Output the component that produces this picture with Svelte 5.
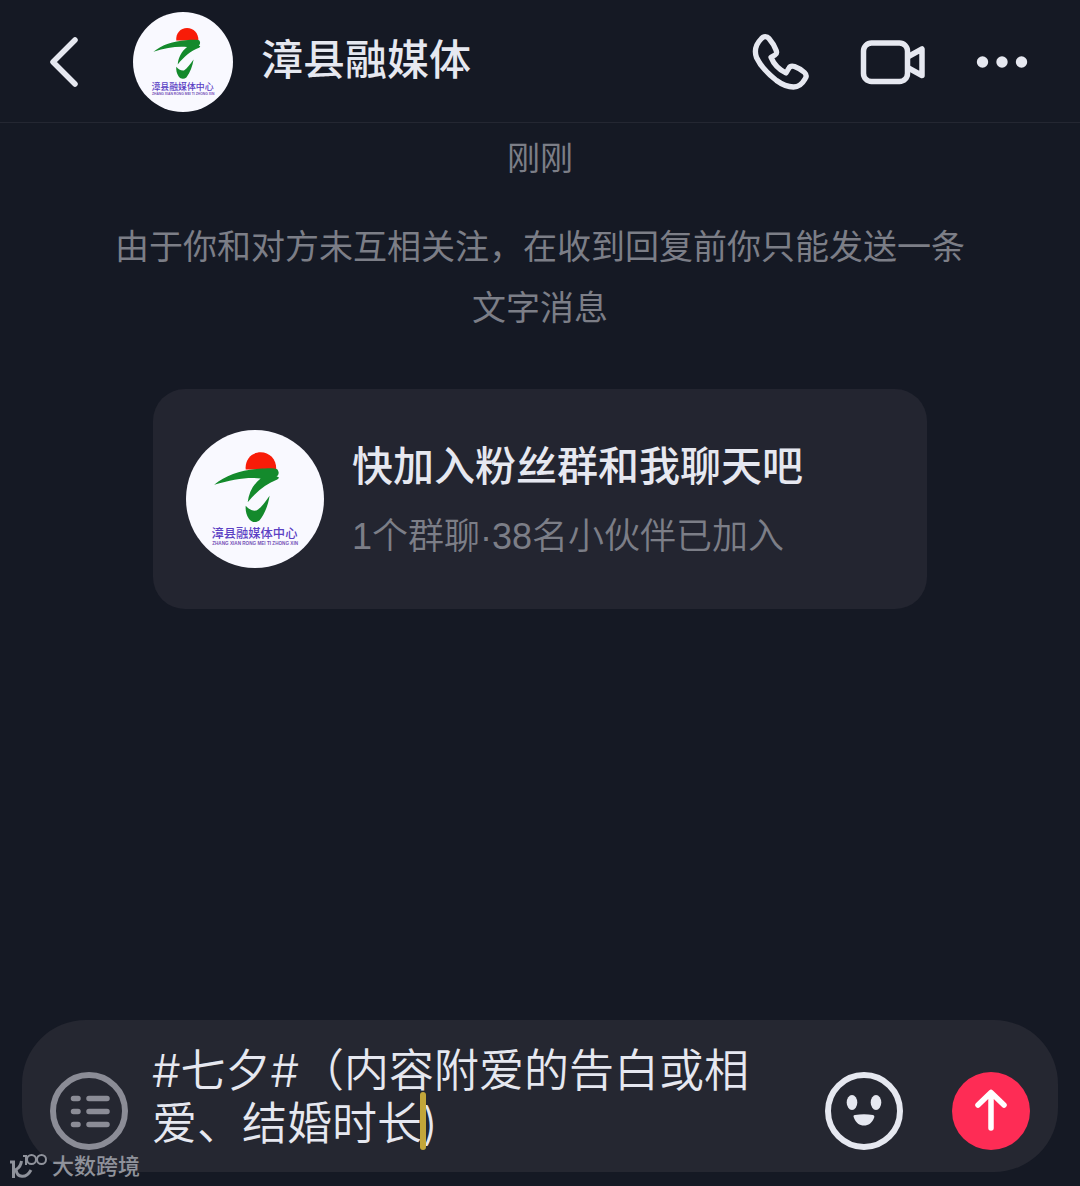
<script>
  let message = $state('#七夕#（内容附爱的告白或相爱、结婚时长)');
</script>

{#snippet logo()}
  <svg class="logo" viewBox="16 14 416 416" role="img" aria-label="漳县融媒体中心">
    <circle cx="224" cy="222" r="208" fill="#f9f9ff" />
    <path d="M196 133C193 104 213 81 241 81C268 81 289 102 288 133Z" fill="#f81c08" />
    <path
      d="M101 179C135 151 184 134 236 131C260 130 278 128 291 132C298 141 296 149 289 155C297 154 298 159 291 163C256 176 229 200 202 232C205 204 218 178 241 160C202 155 155 163 101 179Z"
      fill="#148a2c"
    />
    <path
      d="M196 242C204 252 216 259 228 257C242 249 255 230 268 212C264 238 254 267 238 286C228 294 214 293 206 282C197 269 195 257 196 242Z"
      fill="#148a2c"
    />
    <text class="logo-name" x="93" y="340">漳县融媒体中心</text>
    <text class="logo-pinyin" x="95" y="361">ZHANG XIAN RONG MEI TI ZHONG XIN</text>
  </svg>
{/snippet}

<div class="screen">
  <header class="top">
    <button class="icon" aria-label="返回">
      <svg width="30" height="52" viewBox="0 0 30 52" fill="none" stroke="#e6e8f0" stroke-width="5.5" stroke-linecap="round" stroke-linejoin="round">
        <path d="M26 4L4 26L26 48" />
      </svg>
    </button>
    <div class="avatar small">{@render logo()}</div>
    <h1>漳县融媒体</h1>
    <nav class="actions" aria-label="通话">
      <button class="icon" aria-label="语音通话">
        <svg width="58" height="58" viewBox="0 0 58 58" fill="none" stroke="#e6e8f0" stroke-width="5.3" stroke-linecap="round" stroke-linejoin="round">
          <path d="M9.5 5.5C11.5 3 15 3 17 5.5C20 9 22.5 13 24 17C25 19.5 24.8 21 23 22L19 24.2C21.5 30.5 27 36.5 34 40L37 35C38 33.2 40 32.8 42.5 33.5C46.5 35 50 37 52.5 39.5C54.5 41.5 54.5 44 53 46C50.5 50.5 46 54 41.5 54C36 54 30 51.5 24.5 47.5C16 41 8.5 33 4.5 24.5C2 17.5 4.5 10.5 9.5 5.5Z" />
        </svg>
      </button>
      <button class="icon" aria-label="视频通话">
        <svg width="66" height="46" viewBox="0 0 66 46" fill="none" stroke="#e6e8f0" stroke-width="5.5" stroke-linejoin="round">
          <rect x="3.5" y="4" width="44" height="38.5" rx="8" />
          <path d="M47.5 18L62 10V36.5L47.5 28.5" />
        </svg>
      </button>
      <button class="icon" aria-label="更多">
        <svg width="52" height="14" viewBox="0 0 52 14" fill="#e6e8f0">
          <circle cx="6.5" cy="7" r="5.7" />
          <circle cx="26" cy="7" r="5.7" />
          <circle cx="45.5" cy="7" r="5.7" />
        </svg>
      </button>
    </nav>
  </header>

  <main>
    <p class="time">刚刚</p>
    <p class="notice">由于你和对方未互相关注，在收到回复前你只能发送一条文字消息</p>
    <a class="card" href="#group">
      <div class="avatar large">{@render logo()}</div>
      <div class="card-text">
        <strong>快加入粉丝群和我聊天吧</strong>
        <span class="members">1个群聊·38名小伙伴已加入</span>
      </div>
    </a>
  </main>

  <form class="composer" onsubmit={(e) => e.preventDefault()}>
    <button class="icon" type="button" aria-label="菜单">
      <svg width="78" height="78" viewBox="0 0 78 78" fill="none" stroke="#8b8c96" stroke-linecap="round">
        <circle cx="39" cy="39" r="36" stroke-width="6" />
        <path d="M23.5 26.5H28M39 26.5H57M23.5 39.5H28M39 39.5H57M23.5 52.5H28M39 52.5H57" stroke-width="5.5" />
      </svg>
    </button>
    <div class="field">
      <textarea rows="2" aria-label="发送消息" spellcheck="false" bind:value={message}></textarea>
      <span class="caret"></span>
    </div>
    <button class="icon" type="button" aria-label="表情">
      <svg width="78" height="78" viewBox="0 0 78 78" fill="#e6e8f0">
        <circle cx="39" cy="39" r="36" fill="none" stroke="#e6e8f0" stroke-width="6" />
        <ellipse cx="27" cy="30.5" rx="5.3" ry="7.5" />
        <ellipse cx="51" cy="30.5" rx="5.3" ry="7.5" />
        <path d="M30 43Q39 41.5 48 43Q50 43.5 49 46C47 51 43.5 53.5 39 53.5C34.5 53.5 31 51 29 46C28 43.5 28.5 43.2 30 43Z" />
      </svg>
    </button>
    <button class="icon send" aria-label="发送">
      <svg width="78" height="78" viewBox="0 0 78 78" fill="none" stroke="#fff" stroke-width="5.5" stroke-linecap="round" stroke-linejoin="round">
        <circle cx="39" cy="39" r="39" fill="#fe2c55" stroke="none" />
        <path d="M39 56V21M26 33L39 20.5L52 33" />
      </svg>
    </button>
  </form>

  <div class="watermark">
    <svg width="40" height="26" viewBox="0 0 40 26" fill="none" stroke="#8f929b" stroke-width="3">
      <path d="M0 8H3.5V24M11.5 7C11 11 9 14 6 15.5C7 24 16 25 21 16" />
      <path d="M13 2H16V11" stroke-width="2" />
      <circle cx="21.5" cy="5.5" r="4.5" stroke-width="2" />
      <circle cx="31.5" cy="5.5" r="4.5" stroke-width="2" />
    </svg>
    <span>大数跨境</span>
  </div>
</div>

<style>
  :global(body) {
    margin: 0;
    background: #151924;
  }
  .screen {
    position: relative;
    display: flex;
    flex-direction: column;
    min-height: 100vh;
    box-sizing: border-box;
    padding-bottom: 14px;
    background: #151924;
    color: #e6e8f0;
    font-family: 'Liberation Sans', 'Noto Sans CJK SC', sans-serif;
  }
  svg {
    display: block;
  }
  .icon {
    flex: none;
    padding: 0;
    border: 0;
    background: none;
    cursor: pointer;
  }
  .top {
    display: flex;
    align-items: center;
    padding: 12px 52px 10px 49px;
    border-bottom: 1px solid #242732;
  }
  .avatar {
    flex: none;
  }
  .small {
    width: 100px;
    margin: 0 28px 0 54px;
  }
  .large {
    width: 138px;
  }
  .logo {
    width: 100%;
  }
  .logo-name {
    font-family: 'Noto Sans CJK SC', sans-serif;
    font-size: 37px;
    font-weight: 500;
    fill: #5b41c4;
  }
  .logo-pinyin {
    font-family: 'Liberation Sans', sans-serif;
    font-size: 14px;
    font-weight: 700;
    fill: #7652b8;
  }
  h1 {
    flex: 1;
    margin: 0;
    padding-bottom: 2px;
    font-size: 42px;
    line-height: 60px;
    font-weight: 500;
  }
  .actions {
    display: flex;
    align-items: center;
    gap: 50px;
  }
  main {
    flex: 1;
  }
  p {
    margin: 0;
    text-align: center;
    color: #7c7e87;
  }
  .time {
    padding-top: 12px;
    font-size: 33px;
    line-height: 48px;
  }
  .notice {
    padding: 34px 108px 0;
    font-size: 34px;
    line-height: 61px;
  }
  .card {
    display: flex;
    align-items: center;
    gap: 28px;
    margin: 50px 153px 32px;
    padding: 41px 33px;
    border-radius: 32px;
    background: #232530;
    color: inherit;
    text-decoration: none;
  }
  .card-text {
    display: flex;
    flex-direction: column;
    gap: 16px;
    padding-top: 3px;
  }
  strong {
    font-size: 41px;
    line-height: 56px;
    font-weight: 500;
  }
  .members {
    color: #7c7e87;
    font-size: 36px;
    line-height: 52px;
    font-weight: 350;
  }
  .composer {
    display: flex;
    align-items: flex-end;
    margin: 0 22px;
    padding: 24px 28px 22px;
    border-radius: 64px;
    background: #252731;
  }
  .field {
    position: relative;
    flex: 1;
    margin: 0 62px 0 24px;
  }
  textarea {
    display: block;
    box-sizing: border-box;
    width: 100%;
    height: 106px;
    padding: 0;
    border: 0;
    outline: 0;
    resize: none;
    overflow: hidden;
    background: none;
    color: #e6e8f0;
    font-family: Inter, 'Noto Sans CJK SC', sans-serif;
    font-size: 45px;
    line-height: 53px;
    font-weight: 350;
  }
  .caret {
    position: absolute;
    left: 268px;
    bottom: 0;
    width: 6px;
    height: 58px;
    border-radius: 3px;
    background: #c2a63a;
  }
  .send {
    margin-left: 49px;
  }
  .watermark {
    position: absolute;
    left: 10px;
    bottom: 4px;
    display: flex;
    align-items: center;
    gap: 2px;
    color: #8f929b;
    font-size: 22px;
    line-height: 30px;
    font-weight: 500;
  }
</style>
